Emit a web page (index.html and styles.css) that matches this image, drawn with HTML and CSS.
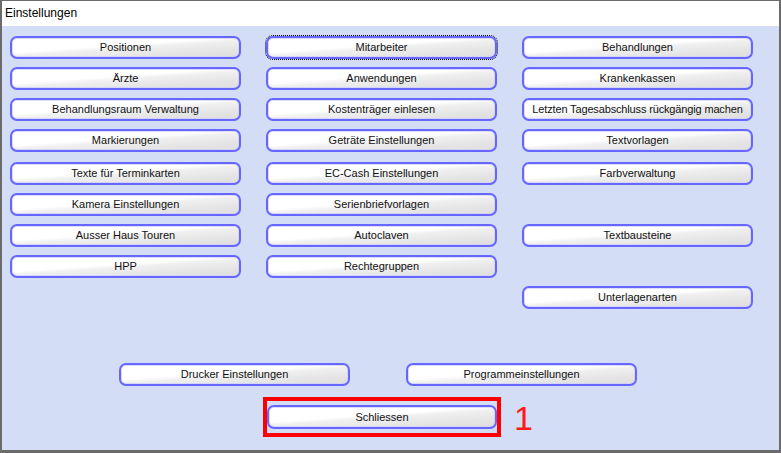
FILE: index.html
```html
<!DOCTYPE html>
<html lang="de">
<head>
<meta charset="utf-8">
<title>Einstellungen</title>
<link rel="stylesheet" href="styles.css">
</head>
<body>
<div class="window">
  <div class="titlebar">Einstellungen</div>
  <div class="content">
    <div class="grid">
      <button class="btn">Positionen</button>
      <button class="btn focused">Mitarbeiter</button>
      <button class="btn">Behandlungen</button>

      <button class="btn">Ärzte</button>
      <button class="btn">Anwendungen</button>
      <button class="btn">Krankenkassen</button>

      <button class="btn">Behandlungsraum Verwaltung</button>
      <button class="btn">Kostenträger einlesen</button>
      <button class="btn tight">Letzten Tagesabschluss rückgängig machen</button>

      <button class="btn">Markierungen</button>
      <button class="btn">Geträte Einstellungen</button>
      <button class="btn">Textvorlagen</button>

      <button class="btn">Texte für Terminkarten</button>
      <button class="btn">EC-Cash Einstellungen</button>
      <button class="btn">Farbverwaltung</button>

      <button class="btn">Kamera Einstellungen</button>
      <button class="btn">Serienbriefvorlagen</button>
      <span class="empty"></span>

      <button class="btn">Ausser Haus Touren</button>
      <button class="btn">Autoclaven</button>
      <button class="btn">Textbausteine</button>

      <button class="btn">HPP</button>
      <button class="btn">Rechtegruppen</button>
      <span class="empty"></span>

      <span class="empty"></span>
      <span class="empty"></span>
      <button class="btn">Unterlagenarten</button>
    </div>
    <div class="bottom-row">
      <button class="btn">Drucker Einstellungen</button>
      <button class="btn">Programmeinstellungen</button>
    </div>
    <div class="close-row">
      <div class="highlight">
        <button class="btn">Schliessen</button>
        <span class="marker">1</span>
      </div>
    </div>
  </div>
</div>
</body>
</html>
```
FILE: styles.css
```css
* { box-sizing: border-box; }
html, body { margin: 0; padding: 0; }
body {
  width: 781px;
  height: 453px;
  overflow: hidden;
  font-family: "Liberation Sans", Arial, sans-serif;
}
.window {
  width: 781px;
  height: 453px;
  border-style: solid;
  border-color: #6b6b6b;
  border-width: 1px 2px 3px 2px;
  display: flex;
  flex-direction: column;
  background: #d3ddf5;
}
.titlebar {
  height: 25px;
  background: #ffffff;
  font-size: 12px;
  line-height: 25px;
  padding-left: 3px;
  color: #000;
  flex: none;
}
.content {
  flex: 1;
  padding: 10px 0 0 8px;
  display: flex;
  flex-direction: column;
}
.grid {
  display: grid;
  grid-template-columns: 231px 231px 231px;
  grid-template-rows: 23px 23px 23px 23px 25px 23px 23px 23px 23px;
  column-gap: 25px;
  row-gap: 8px;
  align-items: end;
}
.btn {
  display: block;
  width: 231px;
  height: 23px;
  margin: 0;
  padding: 0 2px 1px;
  border: 2px solid #6767ff;
  border-radius: 7px;
  background: linear-gradient(176deg, #ffffff 0%, #ffffff 42%, #f0f0f0 52%, #e4e4e4 78%, #dedede 100%);
  box-shadow: inset 0 0 0 1px rgba(205, 205, 255, 0.7);
  font-family: "Liberation Sans", Arial, sans-serif;
  font-size: 11px;
  color: #111;
  text-align: center;
  white-space: nowrap;
  line-height: 18px;
}
.btn.tight {
  letter-spacing: -0.15px;
}
.btn.focused {
  outline: 1px dotted #000;
  outline-offset: 0;
}
.bottom-row {
  display: flex;
  gap: 56px;
  margin-top: 54px;
  padding-left: 109px;
}
.close-row {
  display: flex;
  margin-top: 11px;
  padding-left: 253px;
}
.highlight {
  position: relative;
  border: 4px solid #ff0000;
  padding: 4px 0;
  width: 238px;
  height: 40px;
}
.highlight .btn {
  width: 230px;
  height: 24px;
}
.marker {
  position: absolute;
  left: 247px;
  top: -3px;
  font-family: "Liberation Sans", Arial, sans-serif;
  font-size: 34px;
  line-height: 40px;
  color: #ff1a1a;
}
```
